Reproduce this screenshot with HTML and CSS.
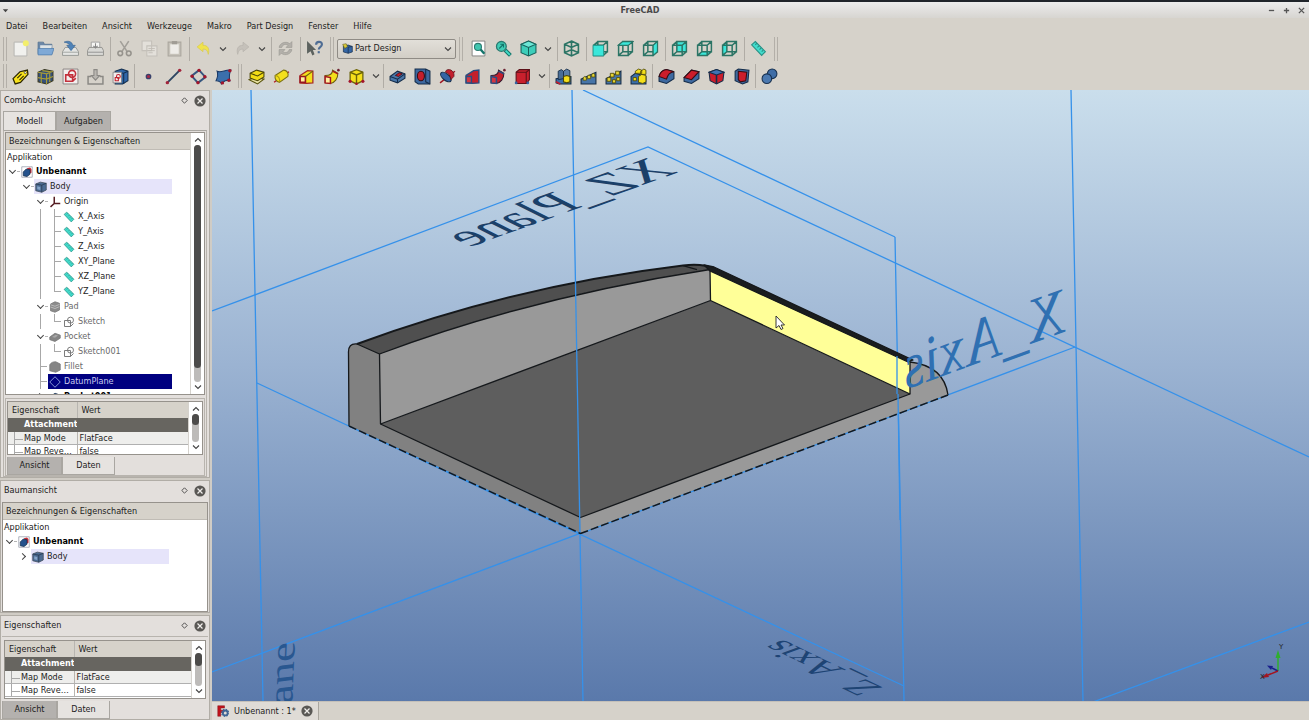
FILE: index.html
```html
<!DOCTYPE html>
<html lang="de">
<head>
<meta charset="utf-8">
<title>FreeCAD</title>
<link rel="stylesheet" href="styles.css">
</head>
<body>
<svg class="defs" aria-hidden="true">
  <defs>
    <symbol id="new" viewBox="0 0 16 16"><path d="M2 2h12v13H2z" fill="#f1f1ee" stroke="#b0b0ac" stroke-width=".8"/><circle cx="13" cy="3" r="2.800" fill="#f3ee6c"/></symbol>
    <symbol id="open" viewBox="0 0 16 16"><path d="M1 2h5l1 2h7v9H1z" fill="#6c88a8" stroke="#52708f" stroke-width=".7"/><path d="M3 5h11l-.5 4H3z" fill="#dfe4e6"/><path d="M1 8h15l-2 6H1z" fill="#7fa9d6" stroke="#4f7cab" stroke-width=".7"/></symbol>
    <symbol id="save" viewBox="0 0 16 16"><path d="M3 7h10l2.500 4v3.500H.5V11z" fill="#e4e5e3" stroke="#8c908d" stroke-width=".8"/><path d="M1 11.500h14" stroke="#a8aba8"/><path d="M2 2c4-2 8 0 8 3h2.500L8.500 10 4.500 5H7C7 3.500 5 2.500 2 2z" fill="#4f83b8" stroke="#3b6592" stroke-width=".6"/></symbol>
    <symbol id="print" viewBox="0 0 16 16"><path d="M4 7V2h8v5" fill="#f7f7f5" stroke="#999" stroke-width=".8"/><path d="M2 7h12l1.500 3v4.500H.5V10z" fill="#d9d9d6" stroke="#8b8b88" stroke-width=".8"/><path d="M8 3v4M6 5.500 8 7.500l2-2" fill="none" stroke="#888"/><path d="M1 11.500h14" stroke="#999"/></symbol>
    <symbol id="cut" viewBox="0 0 16 16"><path d="M4 1 10.500 11M12 1 5.500 11" stroke="#a29f99" stroke-width="1.500"/><g fill="none" stroke="#96938d" stroke-width="1.500"><circle cx="4" cy="12.500" r="2.200"/><circle cx="12" cy="12.500" r="2.200"/></g></symbol>
    <symbol id="copy" viewBox="0 0 16 16"><path d="M1 1h9v9H1zM5.500 5.500H15V15H5.500z" fill="#e3e0da" stroke="#c4c0b9"/><path d="M7 8h6M7 10h6M7 12h4" stroke="#bfbbb4" stroke-width=".8"/></symbol>
    <symbol id="paste" viewBox="0 0 16 16"><path d="M2 2h12v13H2z" fill="#c6c2b9" stroke="#aaa69e"/><path d="M4 4h8v9H4z" fill="#eeece8"/><path d="M5.500 1h5v3h-5z" fill="#a09c95"/></symbol>
    <symbol id="undo" viewBox="0 0 16 16"><path d="M2 6.500 7.500 2v3C12 5 14 8 12.500 13.500 12 10 10.500 8.500 7.500 8.500V11z" fill="#f0e34c" stroke="#d8ca50" stroke-width=".7"/></symbol>
    <symbol id="redo" viewBox="0 0 16 16"><path d="M14 6.500 8.500 2v3C4 5 2 8 3.500 13.500 4 10 5.500 8.500 8.500 8.500V11z" fill="#c5c1ba" stroke="#b8b4ad" stroke-width=".7"/></symbol>
    <symbol id="refresh" viewBox="0 0 16 16"><path d="M2 7C2.500 3 8 .5 12 3.500L14 1.500V7H8.500L10.500 5C8 3.500 5.500 4 4.500 7zM14 9c-.5 4-6 6.500-10 3.500L2 14.500V9h5.500l-2 2c2.500 1.500 5 1 6-2z" fill="#b3b0aa" stroke="#9b9892" stroke-width=".6"/></symbol>
    <symbol id="whatsthis" viewBox="0 0 16 16"><path d="M1 1 9.500 9.500H6.500L8 13.500l-2 1-1.700-4L1 13z" fill="#5c625f"/><path d="M9.500 4.500C9.500 1 15 1 15 4s-3 2.500-3 5" fill="none" stroke="#4f6d94" stroke-width="2"/><path d="M11 10.500h2v2h-2z" fill="#4f6d94"/></symbol>
    <symbol id="fitall" viewBox="0 0 16 16"><path d="M2 1h12v14H2z" fill="#fff" stroke="#777" stroke-width=".8"/><circle cx="7.500" cy="6.500" r="3.300" fill="#42c6b0" stroke="#2b7a70"/><path d="m10 9 3.500 4" stroke="#14756b" stroke-width="2.200"/></symbol>
    <symbol id="fitsel" viewBox="0 0 16 16"><path d="m9.500 9.500 5 5" stroke="#14756b" stroke-width="3.800"/><circle cx="6" cy="6" r="4.600" fill="#41cdb6" stroke="#2b7a70" stroke-width="1.200"/><path d="m10 10 4 4" stroke="#42dcc8" stroke-width="1.800"/><path d="m4 8 4-4M5 4h3v3" fill="none" stroke="#14756b"/></symbol>
    <symbol id="cube" viewBox="0 0 16 16"><path d="m8 1 7 3v8l-7 3-7-3V4z" fill="#3ccdb9" stroke="#17605a"/><path d="m1 4 7 3 7-3-7-3z" fill="#6ce6d6" stroke="#17605a"/><path d="M8 7v8" stroke="#17605a"/></symbol>
    <symbol id="wire-iso" viewBox="0 0 16 16"><path d="m8 1 6.500 3v8L8 15l-6.500-3V4zM1.500 4 8 7l6.500-3M8 7v8M1.500 12 8 9l6.500 3M8 1v8" fill="none" stroke="#2b7465" stroke-width="1.500"/></symbol>
    <symbol id="wire" viewBox="0 0 16 16"><path d="M1.500 5h9v9.500h-9zM5.500 1.500h9V11h-9zM1.500 5l4-3.500M10.500 5l4-3.500M10.500 14.500l4-3.500M1.500 14.500l4-3.500" fill="none" stroke="#2b7465" stroke-width="1.400"/></symbol>
    <symbol id="front" viewBox="0 0 16 16"><use href="#wire"/><path d="M1 5h10v10H1z" fill="#3be7da" stroke="#1a8c80" stroke-width=".7"/></symbol>
    <symbol id="top" viewBox="0 0 16 16"><use href="#wire"/><path d="m1 5 4.500-3.500H15L10.500 5z" fill="#3be7da" stroke="#2b7465"/></symbol>
    <symbol id="right" viewBox="0 0 16 16"><use href="#wire"/><path d="m10.500 5 4-3.500V11l-4 3.500z" fill="#3be7da" stroke="#2b7465"/></symbol>
    <symbol id="rear" viewBox="0 0 16 16"><path d="M5.500 2h9v9h-9z" fill="#3be7da"/><use href="#wire"/></symbol>
    <symbol id="bottom" viewBox="0 0 16 16"><path d="M1.500 14.500 5.500 11h9l-4 3.500z" fill="#3be7da"/><use href="#wire"/></symbol>
    <symbol id="left" viewBox="0 0 16 16"><path d="m1.500 5 4-3.500V11l-4 3.500z" fill="#3be7da"/><use href="#wire"/></symbol>
    <symbol id="ruler" viewBox="0 0 16 16"><path d="m1.500 4.500 3.500-3L14.500 11l-3.500 3.500z" fill="#42dccc" stroke="#2a9085"/><path d="m5 4.500 1.500-1.500M7 7l1.500-1.500M9 9l1.500-1.500M11 11l1.500-1.500" stroke="#2a9085"/></symbol>
    <symbol id="tag" viewBox="0 0 16 16"><path d="m1 10 6.500-6.500L14.500 2l.5 4-7 7.500L3 15z" fill="#f8e21c" stroke="#2b2600" stroke-width="1.200"/><path d="m5 9.500 4-4M7 11.500l4-4" stroke="#2b2600"/><circle cx="12.500" cy="4.300" r="1" fill="#fff" stroke="#222" stroke-width=".6"/></symbol>
    <symbol id="group" viewBox="0 0 16 16"><path d="m1 4 6-2.500L15 3v9l-6 3-8-2z" fill="#34507c" stroke="#3a3820"/><path d="m1 4 8 1.500L15 3M9 5.500V15M5 2.500l8 1.200M4 4.500V14M12 4.500v9M1 9l8 1.500 6-2.500" fill="none" stroke="#a89c35" stroke-width="1.100"/></symbol>
    <symbol id="sketch" viewBox="0 0 16 16"><path d="M1 1h14v14H1z" fill="#f3efee" stroke="#7e7877" stroke-width=".8"/><g fill="none" stroke="#c3303b" stroke-width="1.500"><circle cx="9.500" cy="5.500" r="3.300"/><path d="M3.500 6.500h6.500v6H3.500zM10 12.500l3-3"/></g></symbol>
    <symbol id="import" viewBox="0 0 16 16"><path d="M4 8H1v7h14V8h-3" fill="none" stroke="#8b8985" stroke-width="1.400"/><path d="M6.500 1.500h3V7H12l-4 4.500L4 7h2.500z" fill="#bab7b1" stroke="#8b8985"/></symbol>
    <symbol id="mapsk" viewBox="0 0 16 16"><path d="m3 3 6-2 6 2v9l-5 3H3z" fill="#2f66a8" stroke="#15304f"/><path d="M11 5v10M3 4l8 1 4-2" fill="none" stroke="#15304f"/><path d="M1 4h8v10H1z" fill="#f1eded" stroke="#777" stroke-width=".7"/><path d="M3 9h3v3H3z" fill="none" stroke="#c3202b"/><circle cx="6" cy="8" r="1.800" fill="none" stroke="#c3202b"/></symbol>
    <symbol id="point" viewBox="0 0 16 16"><circle cx="8" cy="8" r="2.100" fill="#a52a4a" stroke="#38426b" stroke-width="1.200"/></symbol>
    <symbol id="line" viewBox="0 0 16 16"><path d="M2 14 14 2" stroke="#2c4562" stroke-width="1.800"/><circle cx="2.200" cy="13.800" r="1.600" fill="#a3253b"/><circle cx="13.800" cy="2.200" r="1.600" fill="#a3253b"/></symbol>
    <symbol id="plane" viewBox="0 0 16 16"><path d="m8.500 2 6 6.500L7.500 14l-6-6.500z" fill="none" stroke="#35567f" stroke-width="1.800"/><g fill="#a3152b"><circle cx="8.500" cy="2.200" r="1.600"/><circle cx="14" cy="8.300" r="1.600"/><circle cx="7.500" cy="13.800" r="1.600"/><circle cx="2" cy="7.700" r="1.600"/></g></symbol>
    <symbol id="binder" viewBox="0 0 16 16"><path d="M2 3c4 2 8-2 13-1-2 4-2 6-1 10-4-1-5 0-8 3-1-3-3-3-5-3 2-4 2-6 1-9z" fill="#3b6fac" stroke="#1a3a68"/><g fill="#a3152b"><circle cx="14" cy="2.500" r="1.600"/><circle cx="13" cy="11.500" r="1.600"/><circle cx="7" cy="14" r="1.600"/></g></symbol>
    <symbol id="pad" viewBox="0 0 16 16"><path d="m1 11 6-2.500 8 2-6 4.500z" fill="#e9e3a4" stroke="#57520d"/><path d="m2 5 6-3 7 2v4.500L9 12 2 9.500z" fill="#f2dc16" stroke="#4c4708"/><path d="m2 5 7 2.500L15 4" fill="none" stroke="#4c4708"/></symbol>
    <symbol id="revolve" viewBox="0 0 16 16"><path d="m1 13.500 14-10" stroke="#b01522" stroke-width="1.200"/><path d="m2 7 8-5c3 0 5 3 4 6l-8 5.500C3 13 1.500 10 2 7z" fill="#f4df1b" stroke="#7c7210"/><path d="M2 7c3 0 5 3 4 6.500" fill="none" stroke="#aa9b13"/></symbol>
    <symbol id="loft" viewBox="0 0 16 16"><path d="m2 7 7-4.500 5 .5v11l-6 .5-6-.5z" fill="#f4df1b" stroke="#a82a24" stroke-width="1.200"/><path d="M2 8h5v5.500H2z" fill="#fff0a0" stroke="#9a1620" stroke-width="1.500"/><path d="m7 8 7-5" stroke="#6b6309"/></symbol>
    <symbol id="sweep" viewBox="0 0 16 16"><path d="M2 7c5 0 7-2 7-5l5 3c0 5-3 9-7 9.500L2 14z" fill="#f4df1b" stroke="#6c5d10"/><path d="m2 8 5 1v5.500L2 14z" fill="#fff0a0" stroke="#a41520" stroke-width="1.400"/><path d="m9 3 5 2.500" stroke="#a41520" stroke-width="1.400"/><circle cx="14.500" cy="2" r="1.200" fill="#6d2230"/></symbol>
    <symbol id="primitive" viewBox="0 0 16 16"><path d="m2 4 6-2.500L14 4v8l-6 3-6-3z" fill="#f4df1b" stroke="#6b6309" stroke-width="1.200"/><path d="m2 4 6 2.500L14 4M8 6.500V15" fill="none" stroke="#6b6309" stroke-width="1.300"/><g fill="#a3152b"><circle cx="2" cy="12.500" r="1.500"/><circle cx="14" cy="12.500" r="1.500"/><circle cx="8" cy="14.800" r="1.200"/></g></symbol>
    <symbol id="pocket" viewBox="0 0 16 16"><path d="m1 8 7-5 7 2.500v4L8 14l-7-2.500z" fill="#4a76a8" stroke="#152d4a"/><path d="m1 8 7 2.500 7-5M8 10.500V14" fill="none" stroke="#152d4a"/><path d="m6 7 3.500-2.500 3 1L9 8z" fill="#bf1e2b" stroke="#3a0c12" stroke-width=".7"/></symbol>
    <symbol id="hole" viewBox="0 0 16 16"><path d="M1 1h10l4 2v12H4l-3-2z" fill="#3d69a0" stroke="#152d4a"/><path d="M11 1v12l4 2" fill="none" stroke="#152d4a"/><ellipse cx="6.500" cy="7.500" rx="3.300" ry="4.500" fill="#c41f2c" stroke="#3a0c12"/></symbol>
    <symbol id="groove" viewBox="0 0 16 16"><path d="m1 14 14-11" stroke="#a01522" stroke-width="1.300"/><ellipse cx="6.500" cy="8.500" rx="3" ry="6" transform="rotate(-50 6.500 8.500)" fill="#3465a4" stroke="#152d4a"/><path d="M7 2c4-2 8 2 7 6l-3 3C11 7 9 5 6 4z" fill="#c41f2c" stroke="#5a1018" stroke-width=".7"/></symbol>
    <symbol id="subloft" viewBox="0 0 16 16"><path d="m2 7 7-4.500 5-.5v12l-6 .5L2 14z" fill="#c41f2c" stroke="#294d80" stroke-width="1.300"/><path d="M2 8h5v6H2z" fill="#d33642" stroke="#294d80" stroke-width="1.300"/></symbol>
    <symbol id="subsweep" viewBox="0 0 16 16"><path d="M2 7c5 0 7-2 7-5l5 3c0 5-3 9-7 9.500L2 14z" fill="#c41f2c" stroke="#3a1c30"/><path d="m2 8 5 1v5.500L2 14z" fill="#d33642" stroke="#294d80" stroke-width="1.400"/><path d="m9 3 5 2.500" stroke="#294d80" stroke-width="1.400"/><circle cx="14.500" cy="2" r="1.200" fill="#6d2230"/></symbol>
    <symbol id="subprim" viewBox="0 0 16 16"><path d="m2 4 3-2.500h9.500V11L12 14.500H2z" fill="#c9202d" stroke="#5c1018"/><path d="M2 4h9.500v10.500M11.500 4l3-2.500" fill="none" stroke="#5c1018"/><circle cx="2" cy="14" r="1.300" fill="#3465a4"/><circle cx="13" cy="14" r="1.300" fill="#3465a4"/></symbol>
    <symbol id="mirror" viewBox="0 0 16 16"><path d="M1 14V10l14-2v7H4z" fill="#3b6ea9" stroke="#142b45"/><path d="m3 3 3-1.500L8 3v7l-5 1z" fill="#496d96" stroke="#142b45" stroke-width=".8"/><path d="m8 3 3-2 3 1.500V8l-6 1z" fill="#5a7fa8" stroke="#142b45" stroke-width=".8"/><path d="m8 8 3-1 3 1v5l-3 1-3-1z" fill="#f4df1b" stroke="#4c4708"/><path d="m1 13 4 2" stroke="#c41f2c" stroke-width="1.500"/></symbol>
    <symbol id="linear" viewBox="0 0 16 16"><path d="M1 15V10.500L15 4v11z" fill="#4674a8" stroke="#142b45"/><g fill="#e6d534" stroke="#4c4708" stroke-width=".7"><path d="m3 9 1.500-1L6 9v2.500H3zM7 7.500l1.500-1 1.500 1V10H7zM11 6l1.500-1L14 6v2.500h-3z"/></g></symbol>
    <symbol id="polar" viewBox="0 0 16 16"><path d="M1 15v-5l14-7v12z" fill="#4674a8" stroke="#142b45"/><g fill="#e6d534" stroke="#4c4708" stroke-width=".8"><path d="M2 9h3.500v3.500H2zM5 5h3.500v3.500H5zM10 3h3.500v3.500H10zM11 9h3v3h-3zM7 11h3v3H7z"/></g></symbol>
    <symbol id="multi" viewBox="0 0 16 16"><path d="M1 15V8l4-3 10 3v7z" fill="#3b6ea9" stroke="#142b45"/><g fill="#f4df1b" stroke="#4c4708" stroke-width=".8"><path d="m5 3 3-2 3 1v3H5zM10 3l3-2 2 1v4h-5zM8 8l3-2 4 1v6l-3 1.500-4-1z"/><path d="M3 9h3v3H3z"/></g></symbol>
    <symbol id="fillet" viewBox="0 0 16 16"><path d="M1 8c1-4 3-6 7-6.500l7 2V10l-7 4.500-7-2z" fill="#3d69a0" stroke="#152d4a"/><path d="M1 8c1-4 3-6 7-6.500l7 2c-4 .5-6 3-7 7z" fill="#cc1d2b" stroke="#3a0c12"/></symbol>
    <symbol id="chamfer" viewBox="0 0 16 16"><path d="m1 9 7-7 7 1.500V10l-7 4.500-7-2z" fill="#3d69a0" stroke="#152d4a"/><path d="m1 9 7-7 7 1.500-7 7.500z" fill="#cc1d2b" stroke="#3a0c12"/></symbol>
    <symbol id="draft" viewBox="0 0 16 16"><path d="m1 4 7-2.500L15 4l-1 8-6 3-6-3z" fill="#cc1d2b" stroke="#152d4a"/><path d="m1 4 7-2.500L15 4 8 6.500z" fill="#3f73b4" stroke="#152d4a"/><path d="M8 6.500V15" stroke="#152d4a" stroke-width="1.500"/></symbol>
    <symbol id="thick" viewBox="0 0 16 16"><path d="m2 3 3-2 10 1-1 11-5 2-7-3z" fill="#3d69a0" stroke="#152d4a"/><path d="m5 3 8 1-1 8-5 1-2-2z" fill="#cc1d2b" stroke="#3a0c12"/></symbol>
    <symbol id="bool" viewBox="0 0 16 16"><circle cx="10.500" cy="5.500" r="4.500" fill="#3f6da6" stroke="#17304f"/><circle cx="5.500" cy="10" r="4.500" fill="#4b79b0" stroke="#17304f"/></symbol>
    <symbol id="doc" viewBox="0 0 16 16"><path d="M1 1h14v14H1z" fill="#fff" stroke="#8b8fa0" stroke-width=".9"/><path d="m8 3 4-1 2 2v5l-4 2z" fill="#cb2b35"/><path d="m3 8 4-4 5 1v6l-4 3-5-1z" fill="#24528c" stroke="#15304f"/></symbol>
    <symbol id="body" viewBox="0 0 16 16"><path d="m1 4 6-2.500L15 3v9l-6 3-8-2z" fill="#4c6b92" stroke="#3c4856"/><path d="m1 4 8 1.500L15 3M9 5.500V15" fill="none" stroke="#26384e"/><path d="m3 7 4 1v4l-4-1z" fill="#86a5c9"/></symbol>
    <symbol id="origin" viewBox="0 0 16 16"><path d="M7 1v9h8M7 10l-5 4.500" fill="none" stroke="#551d23" stroke-width="2"/></symbol>
    <symbol id="gpad" viewBox="0 0 16 16"><path d="m2 4 6-3 6 2v9l-6 3-6-2z" fill="#8b8b8b" stroke="#777"/><path d="m2 5 6 2 6-2.500M2 8l6 2 6-2.500" fill="none" stroke="#c9c9c9"/></symbol>
    <symbol id="gpocket" viewBox="0 0 16 16"><path d="m1 8 7-5 7 2.500v4L8 14l-7-2.500z" fill="#858585" stroke="#777"/><path d="m4 8 5-3 3 1-4 3z" fill="#a8a8a8"/></symbol>
    <symbol id="gsketch" viewBox="0 0 16 16"><g fill="none" stroke="#777" stroke-width="1.300"><circle cx="10" cy="5.500" r="4"/><path d="M2 6h8v8H2zM10 14l4-4"/></g></symbol>
    <symbol id="gfillet" viewBox="0 0 16 16"><path d="M1 5c2-3 4-4 8-4l6 3v8l-6 3-8-2z" fill="#858585" stroke="#777"/></symbol>
    <symbol id="gplane" viewBox="0 0 16 16"><path d="m8 1 7 7-7 7-7-7z" fill="none" stroke="#93a5dd" stroke-width="1.200"/></symbol>
    <symbol id="fc" viewBox="0 0 16 16"><path d="M1 1h9v3H5v3h4v3H5v5H1z" fill="#c1121c" stroke="#7d0b12" stroke-width=".6"/><circle cx="11" cy="10.500" r="3.200" fill="none" stroke="#3e6494" stroke-width="2.400"/><circle cx="11" cy="10.500" r="4.800" fill="none" stroke="#3e6494" stroke-width="1.400" stroke-dasharray="2 1.770"/></symbol>
    <symbol id="chev" viewBox="0 0 10 10"><path d="m2 3.500 3 3 3-3" fill="none" stroke="#444" stroke-width="1.100"/></symbol>
    <symbol id="float" viewBox="0 0 10 10"><path d="m5 2 3 3-3 3-3-3z" fill="none" stroke="#444"/></symbol>
    <symbol id="close" viewBox="0 0 12 12"><circle cx="6" cy="6" r="5.600" fill="#5a5855"/><path d="m3.500 3.500 5 5M8.500 3.500l-5 5" stroke="#f1efec" stroke-width="1.200"/></symbol>
  </defs>
</svg>

<div class="window">
  <header class="titlebar">
    <button class="win-btn" aria-label="Fenstermenü"><svg viewBox="0 0 8 8"><path d="M1 2.500h6L4 6z" fill="#444"/></svg></button>
    <h1 class="win-title">FreeCAD</h1>
    <div class="win-controls">
      <button class="win-btn" aria-label="Minimieren"><svg viewBox="0 0 8 8"><path d="M1 4h6" stroke="#555" stroke-width="1.500"/></svg></button>
      <button class="win-btn" aria-label="Maximieren"><svg viewBox="0 0 8 8"><path d="M1 4h6M4 1v6" stroke="#555" stroke-width="1.500"/></svg></button>
      <button class="win-btn" aria-label="Schließen"><svg viewBox="0 0 8 8"><path d="m1 1 6 6M7 1 1 7" stroke="#555" stroke-width="1.500"/></svg></button>
    </div>
  </header>

  <nav class="menubar">
    <button>Datei</button><button>Bearbeiten</button><button>Ansicht</button><button>Werkzeuge</button><button>Makro</button><button>Part Design</button><button>Fenster</button><button>Hilfe</button>
  </nav>

  <div class="toolbar">
    <i class="handle first"></i>
    <button class="tool" aria-label="Neu"><svg><use href="#new"/></svg></button>
    <button class="tool" aria-label="Öffnen"><svg><use href="#open"/></svg></button>
    <button class="tool" aria-label="Speichern"><svg><use href="#save"/></svg></button>
    <button class="tool" aria-label="Drucken"><svg><use href="#print"/></svg></button>
    <i class="sep"></i>
    <button class="tool" aria-label="Ausschneiden"><svg><use href="#cut"/></svg></button>
    <button class="tool" aria-label="Kopieren"><svg><use href="#copy"/></svg></button>
    <button class="tool" aria-label="Einfügen"><svg><use href="#paste"/></svg></button>
    <i class="sep"></i>
    <button class="tool" aria-label="Rückgängig"><svg><use href="#undo"/></svg></button>
    <button class="drop" aria-label="Rückgängig-Liste"><svg><use href="#chev"/></svg></button>
    <button class="tool" aria-label="Wiederherstellen"><svg><use href="#redo"/></svg></button>
    <button class="drop" aria-label="Wiederherstellen-Liste"><svg><use href="#chev"/></svg></button>
    <i class="sep"></i>
    <button class="tool" aria-label="Aktualisieren"><svg><use href="#refresh"/></svg></button>
    <i class="sep"></i>
    <button class="tool" aria-label="Direkthilfe"><svg><use href="#whatsthis"/></svg></button>
    <i class="handle"></i>
    <div class="workbench">
      <svg class="wb-icon" viewBox="0 0 16 16"><path d="m2 4 7-1 6 2v8l-6 2-7-2z" fill="#3465a4" stroke="#152d4a"/><path d="m9 6v9M9 6l6-1" stroke="#152d4a"/><path d="m1 2 5-1 2 4-4 3z" fill="#d8c93b" stroke="#4c4708" stroke-width=".7"/></svg>
      <select aria-label="Arbeitsbereich"><option>Part Design</option></select>
      <svg class="wb-arrow"><use href="#chev"/></svg>
    </div>
    <i class="handle"></i>
    <button class="tool" aria-label="Alles anzeigen"><svg><use href="#fitall"/></svg></button>
    <button class="tool" aria-label="Auswahl anzeigen"><svg><use href="#fitsel"/></svg></button>
    <button class="tool" aria-label="Darstellung"><svg><use href="#cube"/></svg></button>
    <button class="drop" aria-label="Darstellungsliste"><svg><use href="#chev"/></svg></button>
    <i class="sep"></i>
    <button class="tool" aria-label="Isometrisch"><svg><use href="#wire-iso"/></svg></button>
    <i class="sep"></i>
    <button class="tool" aria-label="Vorne"><svg><use href="#front"/></svg></button>
    <button class="tool" aria-label="Oben"><svg><use href="#top"/></svg></button>
    <button class="tool" aria-label="Rechts"><svg><use href="#right"/></svg></button>
    <i class="sep"></i>
    <button class="tool" aria-label="Hinten"><svg><use href="#rear"/></svg></button>
    <button class="tool" aria-label="Unten"><svg><use href="#bottom"/></svg></button>
    <button class="tool" aria-label="Links"><svg><use href="#left"/></svg></button>
    <i class="sep"></i>
    <button class="tool" aria-label="Abstand messen"><svg><use href="#ruler"/></svg></button>
    <i class="handle"></i>
  </div>

  <div class="toolbar compact">
    <i class="handle first"></i>
    <button class="tool" aria-label="Part"><svg><use href="#tag"/></svg></button>
    <button class="tool" aria-label="Körper"><svg><use href="#group"/></svg></button>
    <button class="tool" aria-label="Skizze"><svg><use href="#sketch"/></svg></button>
    <button class="tool" aria-label="Skizze bearbeiten"><svg><use href="#import"/></svg></button>
    <button class="tool" aria-label="Skizze zuordnen"><svg><use href="#mapsk"/></svg></button>
    <i class="sep"></i>
    <button class="tool" aria-label="Bezugspunkt"><svg><use href="#point"/></svg></button>
    <button class="tool" aria-label="Bezugslinie"><svg><use href="#line"/></svg></button>
    <button class="tool" aria-label="Bezugsebene"><svg><use href="#plane"/></svg></button>
    <button class="tool" aria-label="Formbinder"><svg><use href="#binder"/></svg></button>
    <i class="handle"></i>
    <button class="tool" aria-label="Aufpolsterung"><svg><use href="#pad"/></svg></button>
    <button class="tool" aria-label="Drehteil"><svg><use href="#revolve"/></svg></button>
    <button class="tool" aria-label="Ausformung"><svg><use href="#loft"/></svg></button>
    <button class="tool" aria-label="Rohr"><svg><use href="#sweep"/></svg></button>
    <button class="tool" aria-label="Grundkörper"><svg><use href="#primitive"/></svg></button>
    <button class="drop" aria-label="Grundkörperliste"><svg><use href="#chev"/></svg></button>
    <i class="sep"></i>
    <button class="tool" aria-label="Tasche"><svg><use href="#pocket"/></svg></button>
    <button class="tool" aria-label="Bohrung"><svg><use href="#hole"/></svg></button>
    <button class="tool" aria-label="Nut"><svg><use href="#groove"/></svg></button>
    <button class="tool" aria-label="Abzug-Ausformung"><svg><use href="#subloft"/></svg></button>
    <button class="tool" aria-label="Abzug-Rohr"><svg><use href="#subsweep"/></svg></button>
    <button class="tool" aria-label="Abzug-Grundkörper"><svg><use href="#subprim"/></svg></button>
    <button class="drop" aria-label="Abzugliste"><svg><use href="#chev"/></svg></button>
    <i class="sep"></i>
    <button class="tool" aria-label="Spiegeln"><svg><use href="#mirror"/></svg></button>
    <button class="tool" aria-label="Lineares Muster"><svg><use href="#linear"/></svg></button>
    <button class="tool" aria-label="Polares Muster"><svg><use href="#polar"/></svg></button>
    <button class="tool" aria-label="Mehrfachtransformation"><svg><use href="#multi"/></svg></button>
    <i class="sep"></i>
    <button class="tool" aria-label="Verrundung"><svg><use href="#fillet"/></svg></button>
    <button class="tool" aria-label="Fase"><svg><use href="#chamfer"/></svg></button>
    <button class="tool" aria-label="Schräge"><svg><use href="#draft"/></svg></button>
    <button class="tool" aria-label="Dicke"><svg><use href="#thick"/></svg></button>
    <i class="sep"></i>
    <button class="tool" aria-label="Boolesche Verknüpfung"><svg><use href="#bool"/></svg></button>
  </div>

  <main class="workspace">
    <aside class="docks">
      <section class="dock combo">
        <div class="dock-title"><h2>Combo-Ansicht</h2><button aria-label="Lösen"><svg class="float"><use href="#float"/></svg></button><button aria-label="Schließen"><svg class="close"><use href="#close"/></svg></button></div>
        <div class="tabs top"><button class="active">Modell</button><button>Aufgaben</button></div>
        <div class="tab-body">
          <div class="frame tree-frame">
            <div class="view">
              <div class="column-head">Bezeichnungen &amp; Eigenschaften</div>
              <div class="root">Applikation</div>
              <ul class="tree">
                <li class="node bold"><i class="g open"></i><span class="item"><svg><use href="#doc"/></svg>Unbenannt</span></li>
                <li class="node"><i class="g"></i><i class="g open"></i><span class="item tinted"><svg><use href="#body"/></svg>Body</span></li>
                <li class="node"><i class="g"></i><i class="g"></i><i class="g open"></i><span class="item"><svg><use href="#origin"/></svg>Origin</span></li>
                <li class="node"><i class="g"></i><i class="g"></i><i class="g bar"></i><i class="g tee"></i><span class="item"><svg><use href="#ruler"/></svg>X_Axis</span></li>
                <li class="node"><i class="g"></i><i class="g"></i><i class="g bar"></i><i class="g tee"></i><span class="item"><svg><use href="#ruler"/></svg>Y_Axis</span></li>
                <li class="node"><i class="g"></i><i class="g"></i><i class="g bar"></i><i class="g tee"></i><span class="item"><svg><use href="#ruler"/></svg>Z_Axis</span></li>
                <li class="node"><i class="g"></i><i class="g"></i><i class="g bar"></i><i class="g tee"></i><span class="item"><svg><use href="#ruler"/></svg>XY_Plane</span></li>
                <li class="node"><i class="g"></i><i class="g"></i><i class="g bar"></i><i class="g tee"></i><span class="item"><svg><use href="#ruler"/></svg>XZ_Plane</span></li>
                <li class="node"><i class="g"></i><i class="g"></i><i class="g bar"></i><i class="g ell"></i><span class="item"><svg><use href="#ruler"/></svg>YZ_Plane</span></li>
                <li class="node dim"><i class="g"></i><i class="g"></i><i class="g open"></i><span class="item"><svg><use href="#gpad"/></svg>Pad</span></li>
                <li class="node dim"><i class="g"></i><i class="g"></i><i class="g bar"></i><i class="g ell"></i><span class="item"><svg><use href="#gsketch"/></svg>Sketch</span></li>
                <li class="node dim"><i class="g"></i><i class="g"></i><i class="g open"></i><span class="item"><svg><use href="#gpocket"/></svg>Pocket</span></li>
                <li class="node dim"><i class="g"></i><i class="g"></i><i class="g bar"></i><i class="g ell"></i><span class="item"><svg><use href="#gsketch"/></svg>Sketch001</span></li>
                <li class="node dim"><i class="g"></i><i class="g"></i><i class="g tee"></i><span class="item"><svg><use href="#gfillet"/></svg>Fillet</span></li>
                <li class="node"><i class="g"></i><i class="g"></i><i class="g tee"></i><span class="item selected"><svg><use href="#gplane"/></svg>DatumPlane</span></li>
                <li class="node bold"><i class="g"></i><i class="g"></i><i class="g shut"></i><span class="item"><svg><use href="#pocket"/></svg>Pocket001</span></li>
              </ul>
            </div>
            <div class="scroll"><svg class="up"><use href="#chev"/></svg><div class="track"><div class="thumb tall"></div></div><svg><use href="#chev"/></svg></div>
          </div>
          <div class="props">
            <div class="frame">
              <div class="view">
                <table>
                  <thead><tr><th>Eigenschaft</th><th>Wert</th></tr></thead>
                  <tbody>
                    <tr class="cat"><td>Attachment</td><td></td></tr>
                    <tr class="alt"><td><i class="g tee"></i>Map Mode</td><td>FlatFace</td></tr>
                    <tr><td><i class="g tee"></i>Map Reversed</td><td>false</td></tr>
                  </tbody>
                </table>
              </div>
              <div class="scroll"><svg class="up"><use href="#chev"/></svg><div class="track"><div class="thumb"></div></div><svg><use href="#chev"/></svg></div>
            </div>
            <div class="tabs bottom"><button>Ansicht</button><button class="active">Daten</button></div>
          </div>
        </div>
      </section>

      <section class="dock mini-tree">
        <div class="dock-title"><h2>Baumansicht</h2><button aria-label="Lösen"><svg class="float"><use href="#float"/></svg></button><button aria-label="Schließen"><svg class="close"><use href="#close"/></svg></button></div>
        <div class="frame">
          <div class="view">
            <div class="column-head">Bezeichnungen &amp; Eigenschaften</div>
            <div class="root">Applikation</div>
            <ul class="tree">
              <li class="node bold"><i class="g open"></i><span class="item"><svg><use href="#doc"/></svg>Unbenannt</span></li>
              <li class="node"><i class="g"></i><i class="g shut"></i><span class="item tinted"><svg><use href="#body"/></svg>Body</span></li>
            </ul>
          </div>
        </div>
      </section>

      <section class="dock mini-props">
        <div class="dock-title"><h2>Eigenschaften</h2><button aria-label="Lösen"><svg class="float"><use href="#float"/></svg></button><button aria-label="Schließen"><svg class="close"><use href="#close"/></svg></button></div>
        <div class="props">
          <div class="frame">
            <div class="view">
              <table>
                <thead><tr><th>Eigenschaft</th><th>Wert</th></tr></thead>
                <tbody>
                  <tr class="cat"><td>Attachment</td><td></td></tr>
                  <tr class="alt"><td><i class="g tee"></i>Map Mode</td><td>FlatFace</td></tr>
                  <tr><td><i class="g tee"></i>Map Reversed</td><td>false</td></tr>
                </tbody>
              </table>
            </div>
            <div class="scroll"><svg class="up"><use href="#chev"/></svg><div class="track"><div class="thumb"></div></div><svg><use href="#chev"/></svg></div>
          </div>
          <div class="tabs bottom"><button>Ansicht</button><button class="active">Daten</button></div>
        </div>
      </section>
    </aside>

    <section class="editor">
      <div class="viewport">
        <svg class="scene" viewBox="212 90 1097 611" preserveAspectRatio="xMidYMid slice" role="img" aria-label="3D-Ansicht">
          <g class="guides">
            <path d="M251 90 263 701M895 237 904 701M1071 90 1083 701"/>
            <path d="M212 311 648 147 1309 457M583 90 895 237"/>
            <path d="M257 383 904 686M212 672 1075 347M1085 705 1309 622"/>
          </g>
          <g class="faces">
            <path d="M357 344Q348 343 348.500 353L349 426 580.500 533.500V517.500L380.500 424 379.500 354Z" fill="#818181"/>
            <path d="M580.500 517.500 910 394V362Q944 366 948 395L580.500 533.500Z" fill="#999"/>
            <path d="M380.500 424 710.500 300.500 910 394 580.500 517.500Z" fill="#5e5e5e"/>
            <path d="M379.500 354C480 316 590 288 710 269.500L710.500 300.500 380.500 424Z" fill="#999"/>
            <path d="M357 344C460 306 570 279 683 265.500Q703 263 714 269L710 269.500C590 288 480 316 379.500 354Z" fill="#4f4f4f"/>
            <path d="M710 269.500 910 362V394L710.500 300.500Z" fill="#ffff98"/>
          </g>
          <g class="edges">
            <path d="M349 426 348.500 353Q348 343 357 344L379.500 354 380.500 424 580.500 517.500 910 394V362Q944 366 948 395"/>
            <path d="M380.500 424 710.500 300.500 910 394M710.500 300.500 710 269.500C590 288 480 316 379.500 354M683 265.500l14 4"/>
            <path d="M357 344C460 306 570 279 683 265.500Q703 263 714 269" class="rim"/>
            <path d="M704 265 714 267 913 360 908 362 710 271Z" fill="#1a1d1f"/>
          </g>
          <path class="guides" d="M349 426 580.500 533.500 948 395M572 90 583 701M898 394 900 520M897 356V394"/>
          <path class="hidden-edge" d="M349 426 580.500 533.500M580.500 533.500 948 395"/>
          <text class="axis" transform="matrix(-1.040 .378 .050 1.310 1066.500 331)">X_Axis</text>
          <text class="plane-name" transform="matrix(-1.035 .372 .910 .454 679 172)">XZ_Plane</text>
          <text class="plane-name low" transform="matrix(-.680 -.325 .740 -.270 884 688)">Z_Axis</text>
          <text class="plane-name faint" text-anchor="end" transform="matrix(.040 -.900 .700 -.080 295 641)">YZ_Plane</text>
          <path d="M776 316v12l3-2.500 2 4 2-1-2-3.500h3.500z" fill="#fff" stroke="#222" stroke-width=".9"/>
          <g>
            <path d="M1278 671V656" stroke="#2fae2f" stroke-width="1.500"/><path d="m1278 650 2.500 8h-5z" fill="#2fae2f"/>
            <path d="m1278 671-6-3" stroke="#1a1f8c" stroke-width="1.500"/><path d="m1267 665.500 6 .5-2 4z" fill="#1a1f8c"/>
            <path d="m1278 671-10 4" stroke="#a31520" stroke-width="1.500"/><path d="m1261 678 6-5 2 4z" fill="#a31520"/>
            <text class="gizmo" x="1279" y="649">Y</text><text class="gizmo" x="1260" y="679">X</text>
          </g>
        </svg>
      </div>
      <div class="doc-tabs">
        <div class="doc-tab"><svg class="fc"><use href="#fc"/></svg><span>Unbenannt : 1*</span><button aria-label="Schließen"><svg class="close"><use href="#close"/></svg></button></div>
      </div>
    </section>
  </main>
</div>
</body>
</html>
```
FILE: styles.css
```css
* { box-sizing: border-box; }

body {
  margin: 0;
  background: #d6d2ca;
  color: #1c1c1c;
  font: 9px/15px "DejaVu Sans Condensed", "DejaVu Sans", sans-serif;
}

button, select {
  margin: 0;
  padding: 0;
  border: 0;
  background: none;
  color: inherit;
  font: inherit;
}

h1, h2, ul { margin: 0; padding: 0; font: inherit; list-style: none; }
svg { display: block; }
.defs { position: absolute; width: 0; height: 0; }

.window { display: flex; flex-direction: column; height: 100vh; overflow: hidden; }

/* Title and menu */
.titlebar {
  display: grid;
  grid-template-columns: 1fr auto 1fr;
  align-items: center;
  flex: none;
  height: 18px;
  padding: 0 2px;
  border-top: 2px solid #20252b;
  background: linear-gradient(#ececec, #d7d5d1);
}
.win-title { color: #4a4a4a; font-weight: bold; padding-right: 29px; }
.win-btn { width: 9px; height: 9px; }
.win-btn svg { width: 7px; height: 7px; }
.win-controls { display: flex; justify-content: flex-end; gap: 6px; }

.menubar { display: flex; gap: 15px; flex: none; height: 17px; padding-left: 6px; align-items: center; }

/* Tool bars */
.toolbar { display: flex; align-items: center; flex: none; height: 27px; padding-left: 2px; }
.tool { display: grid; place-items: center; flex: none; width: 25px; height: 25px; }
.tool svg { width: 17px; height: 17px; }
.drop { display: grid; place-items: center; flex: none; width: 14px; height: 25px; }
.drop svg { width: 10px; height: 10px; }
.sep { flex: none; width: 4px; height: 24px; background: linear-gradient(#b0aca5, #b0aca5) center / 1px 100% no-repeat; }
.handle { flex: none; width: 10px; height: 24px; padding: 0 3px; }
.handle::before { content: ""; display: block; height: 100%; border: solid #b3afa8; border-width: 0 1px; }
.handle.first { width: 6px; padding: 0 1px; }
.compact { height: 28px; }
.compact .sep { width: 3px; }
.compact .drop { width: 13px; }
.compact .handle { width: 8px; padding: 0 2px; }
.compact .handle.first { width: 6px; padding: 0 1px; }

.workbench { position: relative; flex: none; width: 119px; height: 20px; }
.workbench select {
  width: 100%;
  height: 100%;
  padding-left: 17px;
  appearance: none;
  border: 1px solid #8f8b85;
  border-radius: 2px;
  background: linear-gradient(#e2dfd9, #d2cec6);
}
.wb-icon { position: absolute; left: 5px; top: 4px; width: 11px; height: 11px; }
.wb-arrow { position: absolute; right: 3px; top: 5px; width: 10px; height: 10px; }

/* Docks */
.workspace { display: flex; flex: 1; min-height: 0; }
.docks { display: flex; flex-direction: column; flex: none; width: 212px; padding-right: 2px; background: #d0ccc5; }
.dock { display: flex; flex-direction: column; padding: 0 1px; border: 1px solid #b1ada6; background: #e3dfdc; }
.combo { flex: 1; min-height: 0; padding: 0 2px; margin-bottom: 2px; }
.mini-tree { flex: none; height: 133px; margin-bottom: 2px; }
.mini-props { flex: none; height: 105px; }
.dock-title { display: flex; align-items: center; flex: none; height: 19px; margin-bottom: 1px; padding: 0 1px 0 2px; }
.combo .dock-title { padding: 0 0 0 1px; }
.dock-title h2 { flex: 1; }
.dock-title button { display: grid; place-items: center; width: 14px; }
.dock-title button + button { margin-left: 2px; }
.float { width: 9px; height: 9px; }
.close { width: 12px; height: 12px; }

.tabs { display: flex; flex: none; }
.tabs button { height: 18px; width: 55px; border: 1px solid #a9a6a1; background: #b4b1ae; }
.tabs .active { width: 53px; background: #e6e3e0; }
.top button { height: 19px; border-bottom: 0; }
.bottom button { border-top: 0; }
.tab-body { display: flex; flex-direction: column; flex: 1; min-height: 0; padding: 1px 1px 0; border: 1px solid #b8b4ae; border-top-color: #a9a6a1; }

.frame { display: flex; min-height: 0; border: 1px solid #96928c; background: #fff; overflow: hidden; }
.view { flex: 1; min-width: 0; overflow: hidden; }
.tree-frame { flex: 1; }
.mini-tree .frame { flex: 1; margin-top: 1px; }
.column-head { height: 17px; padding-left: 3px; border-bottom: 1px solid #c0bcb5; background: #d6d2ca; line-height: 16px; }
.root { height: 14px; padding-left: 1px; line-height: 14px; }
.tree { padding-right: 18px; }
.mini-tree .tree { padding-right: 38px; }
.node { display: flex; height: 15px; }
.item { display: flex; align-items: center; flex: 1; gap: 3px; padding-left: 1px; }
.item svg { width: 12px; height: 12px; }
.bold { font-weight: bold; color: #000; }
.dim { color: #6a6a6a; }
.tinted { background: #e6e4fa; }
.selected { background: #000080; color: #c9c9ee; }

/* Branch guides */
.g { position: relative; flex: none; width: 14px; height: 15px; }
.bar::before, .tee::before { content: ""; position: absolute; left: 6px; top: 0; bottom: 0; border-left: 1px solid #a8a8a8; }
.ell::before { content: ""; position: absolute; left: 6px; top: 0; height: 8px; border-left: 1px solid #a8a8a8; }
.tee::after, .ell::after { content: ""; position: absolute; left: 7px; right: 1px; top: 7px; border-top: 1px solid #a8a8a8; }
.open::before, .shut::before { content: ""; position: absolute; left: 4px; top: 4px; width: 4px; height: 4px; border: solid #444; border-width: 0 1px 1px 0; transform: rotate(45deg); }
.shut::before { left: 3px; top: 5px; transform: rotate(-45deg); }
.open::after { content: ""; position: absolute; left: 11px; right: 0; top: 7px; border-top: 1px solid #b5b5b5; }

/* Scroll bars */
.scroll { display: flex; flex-direction: column; align-items: center; flex: none; width: 14px; padding: 2px 0; border-left: 1px solid #d5d2cd; }
.scroll svg { flex: none; width: 10px; height: 10px; }
.scroll .up { transform: rotate(180deg); }
.track { flex: 1; width: 7px; border-radius: 4px; background: #bdbbb9; }
.thumb { height: 40%; border-radius: 4px; background: #4c4b4a; }
.thumb.tall { height: 94%; }

/* Property tables */
.props { display: flex; flex-direction: column; }
.combo .props { margin-top: 3px; padding: 2px 1px 0; border: 1px solid #b8b4ae; }
.combo .props .frame { height: 54px; }
.mini-props .props { flex: 1; padding: 3px 0 0; border-top: 1px solid #b8b4ae; }
.mini-props .frame { height: 59px; margin: 0 2px; }
.props .tabs { margin-top: 2px; }
table { width: 100%; border-collapse: collapse; table-layout: fixed; line-height: 12px; }
th, td { height: 13px; padding: 0 2px; text-align: left; white-space: nowrap; overflow: hidden; text-overflow: ellipsis; border-bottom: 1px solid #b0b0b0; font-weight: normal; }
th { height: 16px; padding-left: 4px; background: #d6d2ca; border-bottom: 0; }
th:first-child, td:first-child { width: 69px; border-right: 1px solid #b8b5b0; }
td:first-child { padding: 0 4px 0 0; }
.alt { background: #eeeeec; }
.cat { background: #676560; color: #fff; }
.cat td { border-color: #676560; text-overflow: clip; font-weight: bold; }
.cat td:first-child { padding-left: 16px; padding-right: 0; border-color: #676560; }
td .g { display: inline-block; width: 16px; height: 12px; vertical-align: top; }

/* 3D view */
.editor { display: flex; flex: 1; flex-direction: column; min-width: 0; }
.viewport { flex: 1; min-height: 0; background: linear-gradient(#cadeec, #9bb3d2 45%, #5a79ab); }
.scene { width: 100%; height: 100%; }
.guides { fill: none; stroke: #3591ea; stroke-width: 1.3; }
.edges { fill: none; stroke: #15181b; stroke-width: 1.3; stroke-linejoin: round; }
.rim { stroke-width: 2; }
.hidden-edge { fill: none; stroke: #15181b; stroke-width: 1.5; stroke-dasharray: 8 3; }
.scene text { font-family: "Liberation Serif", serif; font-size: 50px; }
.axis { fill: #2f70b2; }
.plane-name { fill: #1b4069; }
.low { fill: #1e4474; }
.faint { fill: #295790; }
.scene .gizmo { font: 7px "DejaVu Sans", sans-serif; fill: #222; }

.doc-tabs { display: flex; flex: none; height: 19px; border-top: 1px solid #c4c0b9; background: #d6d2ca; }
.doc-tab { display: flex; align-items: center; gap: 5px; padding: 0 5px; border-right: 1px solid #aaa69f; background: #dfdbd6; }
.doc-tab .fc { width: 12px; height: 12px; }
```
